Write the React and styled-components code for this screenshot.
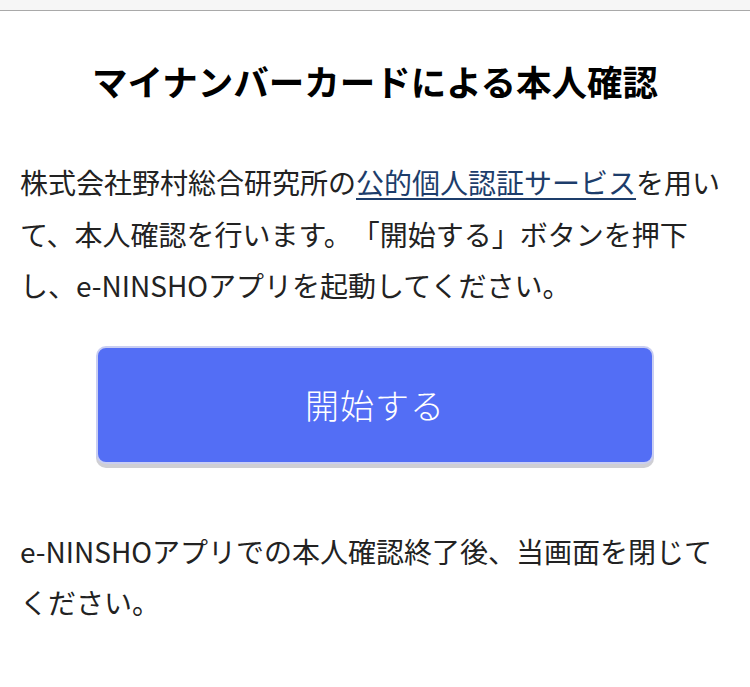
import React from "react";
import styled, { createGlobalStyle } from "styled-components";

const GlobalStyle = createGlobalStyle`
  html, body {
    margin: 0;
    padding: 0;
    background: #fff;
  }
  body {
    font-family: "Noto Sans CJK JP", "Noto Sans", sans-serif;
    color: #111;
    text-spacing-trim: space-all;
  }
`;

const TopBar = styled.div`
  height: 10px;
  background: #f6f6f6;
  border-bottom: 1px solid #a9a9a9;
`;

const Page = styled.main`
  padding: 0 20px;
`;

const Title = styled.h1`
  margin: 44px 0 0;
  text-align: center;
  font-size: 35.5px;
  font-weight: 700;
  line-height: 52px;
  color: #000;
`;

const Paragraph = styled.p`
  margin: ${(p) => p.$mt || 0}px 0 0;
  width: 710px;
  font-size: 28px;
  font-weight: 400;
  line-height: 51.5px;
  color: #222;
`;

const Link = styled.a`
  color: #1d3d6b;
  text-decoration: underline;
  text-decoration-thickness: 2px;
  text-underline-offset: 4px;
`;

const ButtonRow = styled.div`
  display: flex;
  justify-content: center;
  margin-top: 34px;
`;

const StartButton = styled.button`
  width: 558px;
  height: 118px;
  border: 2px solid #c9cef2;
  border-radius: 10px;
  background: #536ef5;
  box-shadow: 0 4px 0 #cfcfd4;
  color: #fff;
  font-family: "Noto Sans CJK JP", sans-serif;
  font-size: 34px;
  font-weight: 300;
  letter-spacing: 1px;
  cursor: pointer;
`;

export default function App() {
  return (
    <>
      <GlobalStyle />
      <TopBar />
      <Page>
        <Title>マイナンバーカードによる本人確認</Title>
        <Paragraph $mt={50}>
          株式会社野村総合研究所の<Link href="#">公的個人認証サービス</Link>
          を用いて、本人確認を行います。「開始する」ボタンを押下し、e-NINSHOアプリを起動してください。
        </Paragraph>
        <ButtonRow>
          <StartButton>開始する</StartButton>
        </ButtonRow>
        <Paragraph $mt={62}>
          e-NINSHOアプリでの本人確認終了後、当画面を閉じてください。
        </Paragraph>
      </Page>
    </>
  );
}
